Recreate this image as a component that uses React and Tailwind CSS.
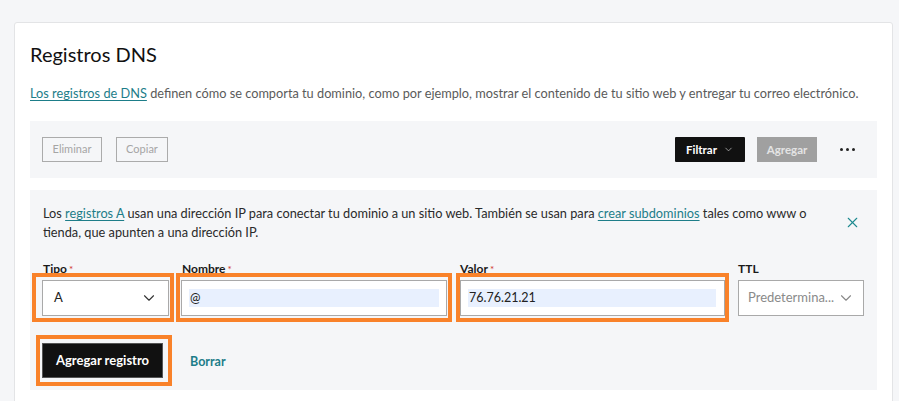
import { ChevronDown, X } from 'lucide-react';

function Orange({ className })
{
    return <div className={"pointer-events-none absolute border-4 border-[#f9822a] " + className} />;
}

function Label({ text, req })
{
    return (
        <div className="text-[12px] leading-[14px] font-bold text-[#1a1a1a] h-[14px]">
            {text}
            {req && <span className="text-[#d0342c] font-normal text-[10px] align-top ml-[2px]">*</span>}
        </div>
    );
}

export default function App()
{
    return (
        <div className="w-[899px] h-[401px] overflow-hidden bg-[#f5f6f8] pt-[22px] pl-[14px] pr-[6px]" style={{ fontFamily: 'Lato, "Liberation Sans", sans-serif' }}>
            <div className="bg-white border border-[#e3e4e6] rounded-[3px] px-[15px] pt-[16px] h-[420px]">
                <h1 className="text-[20px] leading-[30px] text-[#111] font-normal">Registros DNS</h1>
                <p className="mt-[14px] text-[12.75px] leading-[20px] text-[#5a5a5a]">
                    <a className="text-[#1d7d89] underline underline-offset-2">Los registros de DNS</a> definen cómo se comporta tu dominio, como por ejemplo, mostrar el contenido de tu sitio web y entregar tu correo electrónico.
                </p>

                {/* toolbar */}
                <div className="mt-[18px] h-[57px] bg-[#f5f6f8] flex items-center justify-between pl-[12px] pr-[22px]">
                    <div className="flex gap-[14px]">
                        <button className="h-[25px] w-[60px] border-[1.5px] border-[#ababab] text-[11px] text-[#a5a5a5] bg-transparent">Eliminar</button>
                        <button className="h-[25px] w-[52px] border-[1.5px] border-[#ababab] text-[11px] text-[#a5a5a5] bg-transparent">Copiar</button>
                    </div>
                    <div className="flex items-center">
                        <button className="h-[25px] w-[70px] bg-[#111] text-white text-[11.5px] font-bold flex items-center justify-center gap-[6px] rounded-[1px]">
                            Filtrar <ChevronDown size={11} strokeWidth={1.5} className="text-[#cfcfcf]" />
                        </button>
                        <button className="ml-[12px] h-[25px] w-[60px] bg-[#a0a0a0] text-[#e4e4e4] text-[11.5px] font-bold">Agregar</button>
                        <div className="ml-[23px] flex gap-[3px]">
                            <span className="w-[3px] h-[3px] rounded-full bg-[#222]" />
                            <span className="w-[3px] h-[3px] rounded-full bg-[#222]" />
                            <span className="w-[3px] h-[3px] rounded-full bg-[#222]" />
                        </div>
                    </div>
                </div>

                {/* form panel */}
                <div className="mt-[12px] bg-[#f5f6f8] px-[12px] pt-[14px] pb-[12px]">
                    <div className="flex items-start justify-between">
                        <p className="w-[780px] text-[12.75px] leading-[19px] text-[#2a2a2a] pl-[1px]">
                            Los <a className="text-[#1d7d89] underline underline-offset-2">registros A</a> usan una dirección IP para conectar tu dominio a un sitio web. También se usan para <a className="text-[#1d7d89] underline underline-offset-2">crear subdominios</a> tales como www o tienda, que apunten a una dirección IP.
                        </p>
                        <X size={17} strokeWidth={1.5} className="text-[#1d8a90] mt-[10px] mr-[4px]" />
                    </div>

                    <div className="mt-[20px] flex gap-[12px]">
                        <div className="w-[127px]">
                            <div className="pl-[1px]"><Label text="Tipo" req /></div>
                            <div className="relative mt-[4px]">
                                <div className="h-[36px] bg-white border-[1.5px] border-[#a9a9a9] flex items-center justify-between pl-[11px] pr-[10px] text-[13px] text-[#222]">
                                    A <ChevronDown size={18} strokeWidth={1.5} className="text-[#333]" />
                                </div>
                                <Orange className="-left-[10px] -right-[5px] -top-[7px] -bottom-[6px]" />
                            </div>
                        </div>
                        <div className="w-[266px]">
                            <div className="pl-[1px]"><Label text="Nombre" req /></div>
                            <div className="relative mt-[4px]">
                                <div className="h-[36px] bg-white border-[1.5px] border-[#a9a9a9] flex items-center px-[7px]">
                                    <div className="flex-1 h-[18px] bg-[#e8f0fe] text-[12.5px] leading-[18px] text-[#222] pl-[1px]">@</div>
                                </div>
                                <Orange className="-left-[5px] -right-[5px] -top-[7px] -bottom-[6px]" />
                            </div>
                        </div>
                        <div className="w-[265px] ml-[1px]">
                            <Label text="Valor" req />
                            <div className="relative mt-[4px]">
                                <div className="h-[36px] bg-white border-[1.5px] border-[#a9a9a9] flex items-center pl-[7px] pr-[8px]">
                                    <div className="flex-1 h-[18px] bg-[#e8f0fe] text-[12.5px] leading-[18px] text-[#222] pl-[1px]">76.76.21.21</div>
                                </div>
                                <Orange className="-left-[4px] -right-[4px] -top-[7px] -bottom-[6px]" />
                            </div>
                        </div>
                        <div className="w-[126px] ml-[1px]">
                            <Label text="TTL" />
                            <div className="mt-[4px] h-[36px] bg-white border-[1.5px] border-[#a9a9a9] flex items-center justify-between pl-[9px] pr-[8px] text-[13px] text-[#8a8a8a]">
                                <span className="truncate">Predetermina...</span>
                                <ChevronDown size={18} strokeWidth={1.5} className="text-[#888] shrink-0" />
                            </div>
                        </div>
                    </div>

                    <div className="mt-[27px] flex items-center">
                        <div className="relative">
                            <button className="h-[35px] w-[121px] bg-[#111] border border-[#555] text-white text-[13px] font-bold">Agregar registro</button>
                            <Orange className="-left-[6px] -right-[9px] -top-[8px] -bottom-[8px]" />
                        </div>
                        <span className="ml-[27px] mt-[3px] text-[12.5px] font-bold text-[#1d7d89]">Borrar</span>
                    </div>
                </div>
            </div>
        </div>
    );
}
